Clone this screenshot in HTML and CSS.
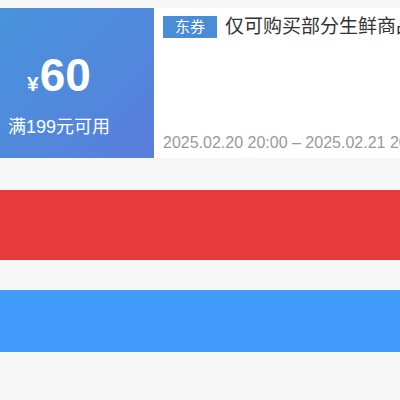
FILE: index.html
```html
<!DOCTYPE html>
<html>
<head>
<meta charset="utf-8">
<link rel="stylesheet" href="styles.css">
</head>
<body>
<div class="page">
  <div class="coupon">
    <div class="coupon-left">
      <div class="amount"><span class="yen">¥</span><span class="num">60</span></div>
      <div class="cond">满199元可用</div>
    </div>
    <div class="coupon-right">
      <div class="title-row"><span class="tag">东券</span><span class="title">仅可购买部分生鲜商品</span></div>
      <div class="date">2025.02.20 20:00 – 2025.02.21 20:00</div>
    </div>
  </div>
  <div class="bar bar-red"></div>
  <div class="bar bar-blue"></div>
</div>
</body>
</html>
```
FILE: styles.css
```css
html, body {
  margin: 0;
  padding: 0;
  background: #f7f7f7;
  overflow: hidden;
}
.page {
  width: 400px;
  height: 400px;
  padding-top: 8px;
  box-sizing: border-box;
  font-family: "Liberation Sans", "Noto Sans CJK SC", sans-serif;
}
.coupon {
  display: flex;
  height: 150px;
  background: #fff;
}
.coupon-left {
  width: 154px;
  flex-shrink: 0;
  background: linear-gradient(135deg, #4794dc 0%, #5a7edc 100%);
  color: #fff;
  display: flex;
  flex-direction: column;
  align-items: flex-start;
  padding-left: 8px;
  box-sizing: border-box;
}
.amount {
  margin-top: 40px;
  margin-left: 19px;
  display: flex;
  align-items: baseline;
  height: 50px;
}
.yen {
  font-size: 21px;
  font-weight: bold;
}
.num {
  font-size: 46px;
  font-weight: bold;
  margin-left: 1px;
}
.cond {
  margin-top: 18px;
  font-size: 18px;
  line-height: 22px;
}
.coupon-right {
  flex: 1;
  min-width: 0;
  padding-left: 9px;
  white-space: nowrap;
  overflow: hidden;
  display: flex;
  flex-direction: column;
}
.title-row {
  margin-top: 8px;
  display: flex;
  align-items: center;
  height: 22px;
}
.tag {
  background: #4a8cd8;
  color: #fff;
  font-size: 15px;
  line-height: 22px;
  padding: 0 12px;
  height: 22px;
  flex-shrink: 0;
}
.title {
  margin-left: 8px;
  font-size: 19px;
  color: #333;
  line-height: 22px;
}
.date {
  margin-top: 95px;
  font-size: 16px;
  color: #999;
  line-height: 20px;
}
.bar {
  width: 400px;
}
.bar-red {
  margin-top: 32px;
  height: 70px;
  background: #e8393d;
}
.bar-blue {
  margin-top: 30px;
  height: 62px;
  background: #409bfb;
}
```
